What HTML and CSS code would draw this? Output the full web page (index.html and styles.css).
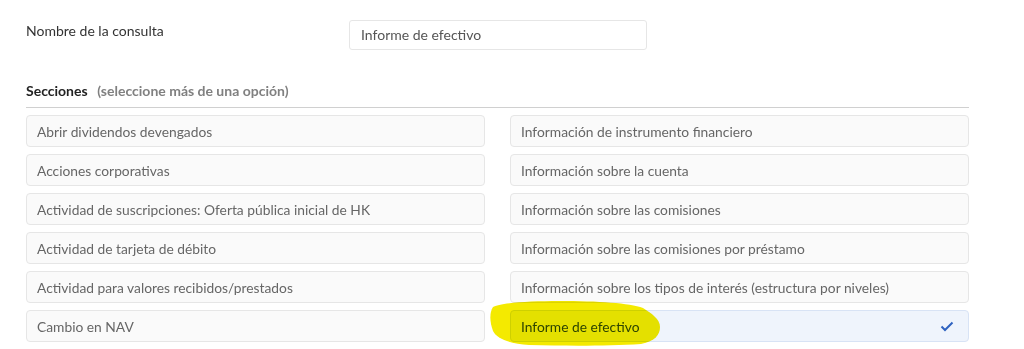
FILE: index.html
```html
<!DOCTYPE html>
<html lang="es">
<head>
    <meta charset="UTF-8">
    <meta name="viewport" content="width=device-width, initial-scale=1.0">
    <title>Consulta</title>
    <link rel="stylesheet" href="styles.css">
</head>
<body>
    <div class="form">
        <div class="field">
            <label class="field-label" for="query-name">Nombre de la consulta</label>
            <div class="field-input">Informe de efectivo</div>
        </div>

        <div class="sections-title">
            <strong>Secciones</strong>
            <span class="hint">(seleccione más de una opción)</span>
        </div>

        <div class="options">
            <div class="option">Abrir dividendos devengados</div>
            <div class="option">Información de instrumento financiero</div>
            <div class="option">Acciones corporativas</div>
            <div class="option">Información sobre la cuenta</div>
            <div class="option">Actividad de suscripciones: Oferta pública inicial de HK</div>
            <div class="option">Información sobre las comisiones</div>
            <div class="option">Actividad de tarjeta de débito</div>
            <div class="option">Información sobre las comisiones por préstamo</div>
            <div class="option">Actividad para valores recibidos/prestados</div>
            <div class="option">Información sobre los tipos de interés (estructura por niveles)</div>
            <div class="option">Cambio en NAV</div>
            <div class="option selected">
                Informe de efectivo
                <svg class="check" width="14" height="11" viewBox="0 0 14 11">
                    <path d="M1.5 5.5 L5 9 L12.5 1.5" fill="none" stroke="#2f62c0" stroke-width="2"/>
                </svg>
                <!-- marker highlight drawn over the screenshot -->
                <svg class="marker" width="178" height="46" viewBox="0 0 178 46">
                    <path d="M4 6 C10 2 40 0 70 0 C110 0 140 2 154 7 C162 12 171 18 171 26 C171 34 166 40 152 43 C120 45 80 45 40 44 C22 43 8 38 4 30 C1 22 0 12 4 6 Z" fill="#f4ea00"/>
                </svg>
            </div>
            <div class="option"></div>
            <div class="option"></div>
        </div>
    </div>
</body>
</html>
```

FILE: styles.css
```css
body {
    margin: 0;
    font-family: Lato, "Liberation Sans", Arial, sans-serif;
    font-size: 14px;
    color: #333;
    background-color: #fff;
}

.form {
    width: 943px;
    padding: 20px 0 0 26px;
}

.field {
    display: flex;
    align-items: flex-start;
}

.field-label {
    width: 323px;
    line-height: 22px;
    color: #333;
}

.field-input {
    width: 285px;
    height: 28px;
    line-height: 28px;
    padding-left: 11px;
    border: 1px solid #e6e6e6;
    border-radius: 3px;
    color: #555;
}

.sections-title {
    margin-top: 31px;
    padding-bottom: 6px;
    border-bottom: 1px solid #d0d0d0;
    line-height: 20px;
    font-size: 14px;
}

.sections-title strong {
    color: #222;
    margin-right: 6px;
}

.sections-title .hint {
    color: #808080;
    font-weight: bold;
}

.options {
    display: grid;
    grid-template-columns: 459px 459px;
    column-gap: 25px;
    row-gap: 7px;
    margin-top: 7px;
}

.option {
    position: relative;
    display: flex;
    align-items: center;
    justify-content: space-between;
    height: 30px;
    padding: 0 14px 0 10px;
    border: 1px solid #e6e6e6;
    border-radius: 4px;
    background-color: #fafafa;
    color: #666;
    font-size: 13.8px;
}

.option.selected {
    background-color: #eff4fc;
    border-color: #d8e3f5;
    color: #2f4a86;
}

.marker {
    position: absolute;
    left: -22px;
    top: -10px;
    mix-blend-mode: multiply;
    pointer-events: none;
}
```
